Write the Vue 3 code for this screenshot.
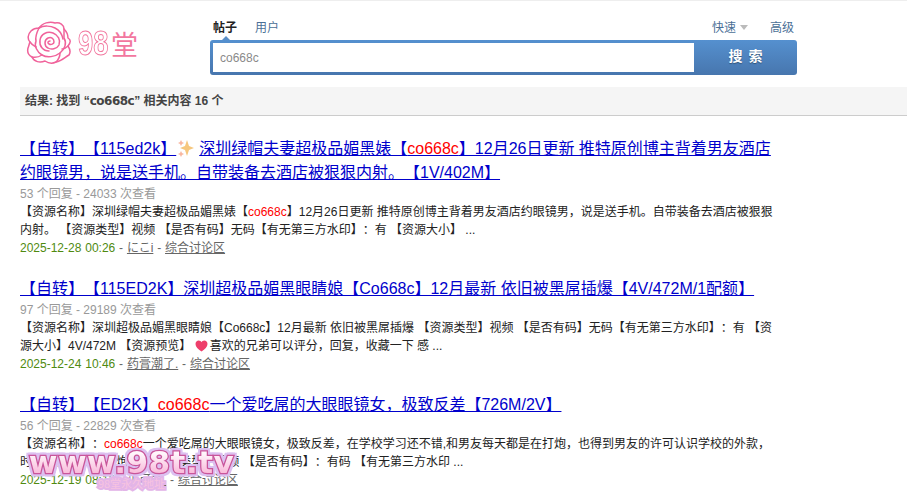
<template>
  <div class="page">
    <header class="head">
      <div class="logo">
        <svg class="rose" width="46" height="44" viewBox="0 0 46 44" fill="none" stroke="#f0639b" stroke-width="1.5" stroke-linecap="round" stroke-linejoin="round">
          <path d="M13 7C16 2 24 0 29 2C34 1 38 4 38 8C41 11 42 14 42 17C45 19 45 21 42 25C44 28 45 31 43 34C39 36 36 40 30 41C26 43 22 42 19 40C14 42 8 41 6 36C2 34 1 31 2 27C3 25 3 23 4 21C1 18 2 13 5 10C7 8 10 7 13 7Z" />
          <path d="M13 7C11 11 9 16 10 20C8 25 11 31 16 34C21 37 29 36 34 32C39 28 41 22 38 17C38 14 38 11 38 8" />
          <path d="M13 7C18 4 25 5 29 7C33 9 36 13 37 18M6 36C10 37 13 36 16 34M30 41C33 38 34 35 34 32M4 21C6 24 8 25 10 26M42 25C40 27 38 28 36 28" />
          <path d="M23 30C17 30 13 25 14 19C15 13 21 10 27 12C32 14 35 19 33 24C31 28 25 29 22 27C18 25 18 19 22 17C25 16 28 17 28 21C28 23 25 24 23 23C21 22 22 20 24 20" />
        </svg>
        <span class="brand"><span class="num">98</span><span class="tang">堂</span></span>
      </div>
      <div class="search">
        <div class="tabs">
          <div class="tabs-left">
            <span class="tab on">帖子</span>
            <span class="tab">用户</span>
          </div>
          <div class="tabs-right">
            <span class="tab">快速<i class="caret"></i></span>
            <span class="tab">高级</span>
          </div>
        </div>
        <div class="box">
          <input class="kw" value="co668c" />
          <div class="btn">搜 索</div>
        </div>
      </div>
    </header>

    <div class="result">结果: 找到 “<span class="rk">co668c</span>” 相关内容 16 个</div>

    <ul class="list">
      <li v-for="item in items" :key="item.date">
        <h3>
          <a>
            <template v-for="(p, i) in item.title" :key="i">
              <svg v-if="p === '*'" class="spark" width="18" height="18" viewBox="0 0 18 18">
                <path d="M10 1L12 7L17 9L12 11L10 17L8 11L3 9L8 7Z" fill="#f6c77e" />
                <path d="M4 1L5 3L7 4L5 5L4 7L3 5L1 4L3 3Z" fill="#f8b7a0" />
                <path d="M4 12L5 14L7 15L5 16L4 18L3 16L1 15L3 14Z" fill="#f8b7a0" />
              </svg>
              <span v-else :class="{ hl: p.hl }">{{ p.hl ? p.hl : p }}</span>
            </template>
          </a>
        </h3>
        <p class="meta">{{ item.meta }}</p>
        <p class="desc">
          <template v-for="(p, i) in item.desc" :key="i">
            <svg v-if="p === '#'" class="heart" width="13" height="12" viewBox="0 0 13 12">
              <path d="M6.5 11.5C3 9 .5 7 .5 4C.5 2 2 .5 3.7 .5C5 .5 6 1.2 6.5 2.3C7 1.2 8 .5 9.3 .5C11 .5 12.5 2 12.5 4C12.5 7 10 9 6.5 11.5Z" fill="#ee3f6b" />
            </svg>
            <span v-else :class="{ hl: p.hl }">{{ p.hl ? p.hl : p }}</span>
          </template>
        </p>
        <p class="info">
          <span class="date">{{ item.date }}</span> -
          <a>{{ item.author }}</a> -
          <a>综合讨论区</a>
        </p>
      </li>
    </ul>

    <div class="mark">
      <div class="mark-url"><span>www.98t.tv</span></div>
      <div class="mark-sub">98堂永久地址</div>
    </div>
  </div>
</template>

<script setup>
const kw = { hl: 'co668c' }

const items = [
  {
    title: ['【自转】【115ed2k】', '*', '深圳绿帽夫妻超极品媚黑婊【', kw, '】12月26日更新 推特原创博主背着男友酒店约眼镜男，说是送手机。自带装备去酒店被狠狠内射。【1V/402M】'],
    meta: '53 个回复 - 24033 次查看',
    desc: ['【资源名称】深圳绿帽夫妻超极品媚黑婊【', kw, '】12月26日更新 推特原创博主背着男友酒店约眼镜男，说是送手机。自带装备去酒店被狠狠内射。 【资源类型】视频 【是否有码】无码【有无第三方水印】：有 【资源大小】 ...'],
    date: '2025-12-28 00:26',
    author: 'にこi'
  },
  {
    title: ['【自转】【115ED2K】深圳超极品媚黑眼睛娘【Co668c】12月最新 依旧被黑屌插爆【4V/472M/1配额】'],
    meta: '97 个回复 - 29189 次查看',
    desc: ['【资源名称】深圳超极品媚黑眼睛娘【Co668c】12月最新 依旧被黑屌插爆 【资源类型】视频 【是否有码】无码【有无第三方水印】：有 【资源大小】4V/472M 【资源预览】 ', '#', '喜欢的兄弟可以评分，回复，收藏一下 感 ...'],
    date: '2025-12-24 10:46',
    author: '药膏潮了.'
  },
  {
    title: ['【自转】【ED2K】', kw, '一个爱吃屌的大眼眼镜女，极致反差【726M/2V】'],
    meta: '56 个回复 - 22829 次查看',
    desc: ['【资源名称】：', kw, '一个爱吃屌的大眼眼镜女，极致反差，在学校学习还不错,和男友每天都是在打炮，也得到男友的许可认识学校的外款，时不时会约出来打炮。 【资源类型】视频 【是否有码】：有码 【有无第三方水印 ...'],
    date: '2025-12-19 08:12',
    author: '小可爱.'
  }
]
</script>

<style>
html, body {
  margin: 0;
  background: #fff;
  overflow: hidden;
}
</style>

<style scoped>
.page {
  position: relative;
  width: 907px;
  height: 498px;
  overflow: hidden;
  border-top: 1px solid #eee;
  box-sizing: border-box;
  font-family: "Liberation Sans", "Noto Sans CJK SC", sans-serif;
  font-size: 12px;
  color: #333;
  text-spacing-trim: space-all;
}
.head {
  display: flex;
  height: 86px;
  box-sizing: border-box;
  padding: 18px 0 0 26px;
}
.logo {
  display: flex;
  align-items: center;
  width: 184px;
  height: 48px;
  gap: 6px;
}
.brand {
  display: flex;
  align-items: center;
  color: #f2779f;
}
.num {
  width: 30px;
  font-size: 35px;
  line-height: 40px;
  font-weight: bold;
  color: #fff;
  -webkit-text-stroke: 1px #f2779f;
  transform: scaleX(0.78);
  transform-origin: left center;
}
.tang {
  margin-left: 3px;
  font-size: 27px;
}
.search {
  width: 587px;
}
.tabs {
  display: flex;
  justify-content: space-between;
  height: 21px;
  padding: 0 3px;
}
.tabs-left, .tabs-right {
  display: flex;
  gap: 18px;
  line-height: 18px;
}
.tabs-right {
  gap: 22px;
}
.tab {
  color: #4b6f96;
}
.tab.on {
  color: #222;
  font-weight: bold;
}
.caret {
  display: inline-block;
  margin-left: 4px;
  border: 4px solid transparent;
  border-top: 5px solid #bbb;
  border-bottom: 0;
  vertical-align: 2px;
}
.box {
  position: relative;
  display: flex;
  height: 35px;
  box-sizing: border-box;
  border-radius: 3px;
  background: linear-gradient(#5590cf, #4776ae);
}
.box::before {
  content: "";
  position: absolute;
  left: 12px;
  top: -4px;
  border: 4px solid transparent;
  border-bottom-color: #5a8ec5;
  border-top: 0;
}
.kw {
  width: 474px;
  height: 29px;
  margin: 3px 0 0 3px;
  padding: 0 0 0 7px;
  box-sizing: content-box;
  border: 0;
  outline: 0;
  background: #fff;
  color: #8a8a8a;
  font: 12px "Liberation Sans", sans-serif;
}
.btn {
  flex: 1;
  text-align: center;
  line-height: 33px;
  color: #fff;
  font-size: 14px;
  font-weight: bold;
  word-spacing: 2px;
  text-shadow: 0 1px 1px rgba(0, 0, 0, 0.35);
}
.result {
  height: 28px;
  margin-left: 20px;
  padding-left: 5px;
  background: #f5f5f5;
  border-bottom: 1px solid #ccc;
  line-height: 28px;
  font-size: 12px;
  font-weight: bold;
  color: #444;
}
.rk {
  font-family: "DejaVu Sans", sans-serif;
  letter-spacing: -0.5px;
}
.list {
  list-style: none;
  margin: 0;
  padding: 21px 0 0 20px;
  width: 760px;
}
.list li {
  margin-bottom: 20px;
}
h3 {
  margin: 0 0 1px;
  font-size: 16px;
  font-weight: normal;
  line-height: 24px;
}
h3 a {
  color: #00c;
  text-decoration: underline;
}
h3 .spark {
  vertical-align: -3px;
  margin: 0 4px 0 1px;
}
.hl {
  color: #f00;
}
p {
  margin: 0;
  line-height: 18px;
}
.meta {
  color: #999;
  line-height: 16px;
  margin-bottom: 2px;
}
.desc {
  color: #222;
  line-height: 17.5px;
}
.heart {
  vertical-align: -2px;
  margin-right: 2px;
}
.date {
  color: #4f8a10;
}
.info {
  color: #666;
  word-spacing: 0.5px;
}
.info a {
  color: #666;
  text-decoration: underline;
}
.mark {
  position: absolute;
  left: 25px;
  top: 440px;
  width: 213px;
  text-align: center;
  font-family: "DejaVu Sans", sans-serif;
}
.mark-url {
  position: relative;
  font-size: 31px;
  line-height: 42px;
  font-weight: bold;
  letter-spacing: 0.5px;
}
.mark-url span {
  position: relative;
  display: block;
  color: transparent;
  background: linear-gradient(#fff6fb 30%, #f9bcdb 75%);
  -webkit-background-clip: text;
  background-clip: text;
}
.mark-url::before {
  content: "www.98t.tv";
  position: absolute;
  inset: 0;
  color: #c9559a;
  -webkit-text-stroke: 2.5px #c9559a;
  filter: drop-shadow(2px 0 0 #dcc0f0) drop-shadow(-2px 0 0 #dcc0f0) drop-shadow(0 2px 0 #dcc0f0) drop-shadow(0 -2px 0 #dcc0f0);
}
.mark-sub {
  margin-top: -7px;
  font-family: "Noto Sans CJK SC", sans-serif;
  font-size: 11px;
  line-height: 14px;
  color: #f7c3e0;
  -webkit-text-stroke: 4px #e3b5e8;
  paint-order: stroke fill;
}
</style>
